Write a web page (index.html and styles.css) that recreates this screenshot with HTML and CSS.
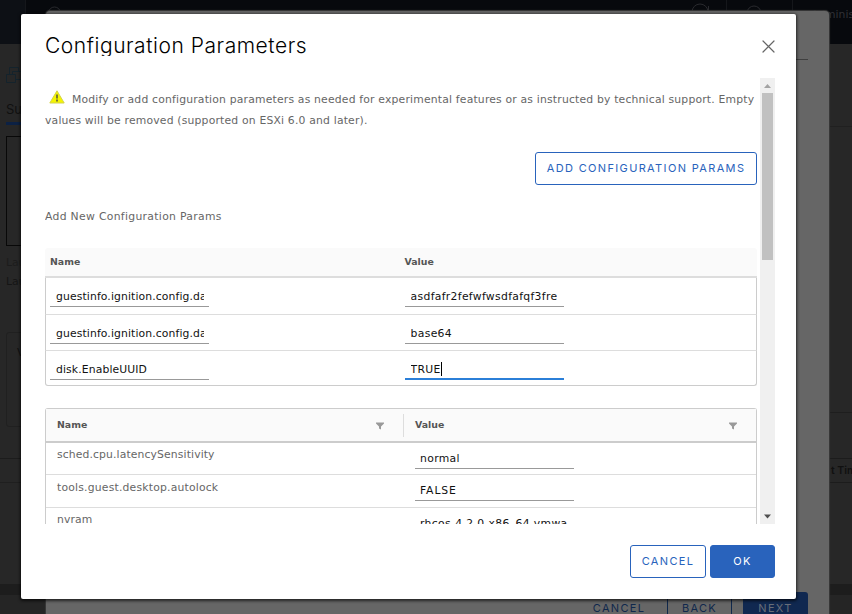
FILE: index.html
```html
<!DOCTYPE html>
<html lang="en">
<head>
<meta charset="utf-8">
<title>Configuration Parameters</title>
<link rel="stylesheet" href="styles.css">
</head>
<body>
<div class="page">
  <header class="topbar">
    <div class="topbar-brand"></div>
    <svg class="topbar-icons" width="826" height="44" viewBox="26 0 826 44" fill="none" stroke="#292a2e">
      <path d="M726.500 0v44M792.500 0v44" stroke="#15171b"/>
      <circle cx="54.500" cy="13" r="6"/><path d="M692 12a8 8 0 0 1 16 0M708.500 6v6M747 13a7 7 0 0 1 14 0" />
    </svg>
    <span class="topbar-user">Adminis</span>
  </header>
  <div class="page-main">
    <aside class="page-left">
      <svg class="vm-icon" width="20" height="20" viewBox="0 0 20 20" fill="none" stroke="#14232c"><path d="M3.500 8V1.500h9V5M6.500 8V5.500H18v8h-8"/><path d="M.5 8.500h9v8h-9z"/></svg>
      <span class="tab">Sum</span>
      <div class="console"></div>
      <p class="launch dim">Laun</p>
      <p class="launch">Laun</p>
      <div class="card">V</div>
      <div class="tasks"></div>
    </aside>
    <aside class="page-right">
      <div class="right-top"></div>
      <div class="right-mid"></div>
      <div class="right-row"></div>
      <div class="right-head">t Tim</div>
    </aside>
  </div>
  <div class="page-strip"></div>
  <div class="page-foot"></div>
</div>

<section class="wizard">
  <div class="wizard-rule"></div>
  <footer class="wizard-footer">
    <span class="wbtn plain">CANCEL</span>
    <span class="wbtn outline">BACK</span>
    <span class="wbtn solid">NEXT</span>
  </footer>
</section>

<section class="modal">
  <header class="modal-header">
    <h1>Configuration Parameters</h1>
    <svg class="close" width="13" height="13" viewBox="0 0 13 13" fill="none" stroke="#666" stroke-width="1.200" stroke-linecap="round"><path d="M1 1l11 11M12 1L1 12"/></svg>
  </header>
  <div class="modal-body">
    <div class="content">
      <p class="intro"><svg class="warn" width="16" height="14" viewBox="0 0 16 14"><path d="M8 .8L15.200 13H.8z" fill="#f5f500" stroke="#d3d34a" stroke-linejoin="round"/><path d="M7 4.500h2v4H7zM7 9.500h2v2H7z" fill="#777733"/></svg>Modify or add configuration parameters as needed for experimental features or as instructed by technical support. Empty<br>values will be removed (supported on ESXi 6.0 and later).</p>
      <div class="actions"><button class="btn add">ADD CONFIGURATION PARAMS</button></div>
      <p class="subtitle">Add New Configuration Params</p>
      <div class="new-grid">
        <div class="row head"><span>Name</span><span>Value</span></div>
        <div class="row first"><div class="input"><span>guestinfo.ignition.config.data</span></div><div class="input"><span>asdfafr2fefwfwsdfafqf3fre</span></div></div>
        <div class="row"><div class="input"><span>guestinfo.ignition.config.data</span></div><div class="input"><span>base64</span></div></div>
        <div class="row last"><div class="input"><span>disk.EnableUUID</span></div><div class="input focused"><span>TRUE</span><i class="caret"></i></div></div>
      </div>
      <div class="grid">
        <div class="grow ghead">
          <div class="gcell"><span>Name</span><svg width="8" height="8" viewBox="0 0 8 8"><path d="M0 .5h8v1L5 4.500V7.500L3 6.500v-2L0 1.500z" fill="#999"/></svg></div>
          <div class="gcell"><span>Value</span><svg width="8" height="8" viewBox="0 0 8 8"><path d="M0 .5h8v1L5 4.500V7.500L3 6.500v-2L0 1.500z" fill="#999"/></svg></div>
        </div>
        <div class="grow"><span class="key">sched.cpu.latencySensitivity</span><div class="input"><span>normal</span></div></div>
        <div class="grow second"><span class="key">tools.guest.desktop.autolock</span><div class="input caps"><span>FALSE</span></div></div>
        <div class="grow third"><span class="key">nvram</span><div class="input"><span>rhcos-4.2.0-x86_64-vmwa</span></div></div>
      </div>
    </div>
    <div class="scrollbar">
      <svg width="15" height="15" viewBox="0 0 15 15"><path d="M4 10l3.500-4L11 10z" fill="#a3a3a3"/></svg>
      <div class="thumb"></div>
      <svg width="15" height="15" viewBox="0 0 15 15"><path d="M4 5.500h7L7.500 9.500z" fill="#505050"/></svg>
    </div>
  </div>
  <footer class="modal-footer">
    <button class="btn cancel">CANCEL</button>
    <button class="btn ok">OK</button>
  </footer>
</section>
</body>
</html>
```

FILE: styles.css
```css
* { box-sizing: border-box; }
body {
  margin: 0;
  width: 852px;
  height: 614px;
  overflow: hidden;
  position: relative;
  background: #272727;
  font-family: "DejaVu Sans", sans-serif;
  font-size: 10.8px;
  color: #666;
}
p, h1 { margin: 0; }

/* dimmed page below the dialogs */
.page { height: 614px; display: flex; flex-direction: column; }
.topbar { height: 44px; flex: none; display: flex; position: relative; background: #07090d; overflow: hidden; }
.topbar-brand { width: 26px; background: #0d1015; border-right: 1px solid #15171b; }
.topbar-icons { flex: none; }
.topbar-user { position: absolute; left: 811px; top: 8px; color: #303136; }
.page-main { height: 540px; display: flex; justify-content: space-between; }
.page-left { width: 46px; overflow: hidden; padding-left: 6px; display: flex; flex-direction: column; }
.vm-icon { margin-top: 22px; flex: none; }
.tab { height: 24px; margin-top: 15px; font: 13px/16px Inter, sans-serif; color: #101010; border-bottom: 3px solid #0c2144; flex: none; }
.console { height: 110px; margin-top: 11px; border: 1px solid #080808; flex: none; }
.launch { color: #151515; height: 19px; line-height: 19px; padding-top: 7px; flex: none; }
.launch.dim { color: #1c1c1c; }
.card { height: 95px; margin-top: 48px; padding: 13px 10px; border: 1px solid #202020; border-radius: 3px; color: #101010; flex: none; }
.tasks { height: 25px; margin: 31px 0 0 -6px; border-top: 1px solid #1c1c1c; border-bottom: 1px solid #1f1f1f; flex: none; }
.page-right { width: 23px; overflow: hidden; }
.right-top { height: 83px; border-bottom: 1px solid #202020; }
.right-mid { height: 285px; }
.right-row { height: 47px; border-top: 1px solid #1e1e1e; border-bottom: 1px solid #1c1c1c; }
.right-head { height: 24px; padding-left: 2px; white-space: nowrap; font: 600 10.5px/24px Inter, sans-serif; color: #101010; border-bottom: 1px solid #1c1c1c; }
.page-strip { height: 11px; background: #1d1d1d; }
.page-foot { height: 19px; background: #252525; }

/* wizard between page and dialog */
.wizard {
  position: absolute; left: 46px; top: 11px; width: 783px; height: 620px;
  background: #666; border-radius: 4px;
  box-shadow: 0 0 1px 1px #3a3a3a;
}
.wizard-rule { margin: 48px 21px 0 22px; border-top: 1px solid #3f3f3f; }
.wizard-footer { margin-top: 532px; padding-right: 21px; height: 33px; display: flex; justify-content: flex-end; }
.wbtn { height: 33px; line-height: 32px; text-align: center; border-radius: 3px; font-family: Inter, sans-serif; font-size: 11px; letter-spacing: 1.3px; color: #10284c; }
.plain { width: 78px; margin-right: 9px; }
.outline { width: 65px; border: 1px solid #10284c; line-height: 30px; margin-right: 11px; }
.solid { width: 65px; background: #102850; color: #686e78; }

/* dialog */
.modal {
  position: absolute; left: 21px; top: 14px; width: 775px; height: 585px;
  padding: 0 21px 21px 24px;
  background: #fff; border-radius: 2px;
  box-shadow: 0 1px 3px 1px rgba(0, 0, 0, .65);
  display: flex; flex-direction: column;
}
.modal-header { height: 64px; display: flex; justify-content: space-between; }
h1 { margin-top: 18px; height: 24px; line-height: 28px; overflow: hidden; font-family: Inter, sans-serif; font-size: 21px; font-weight: 300; color: #000; letter-spacing: .54px; white-space: nowrap; }
.close { margin-top: 26px; }
.modal-body { height: 446px; display: flex; justify-content: space-between; overflow: hidden; }
.content { width: 712px; height: 446px; overflow: hidden; }
.intro { margin-top: 11px; height: 42px; line-height: 21px; white-space: nowrap; letter-spacing: .187px; }
.warn { margin: 0 7px 0 4px; vertical-align: -1px; }
.actions { margin-top: 21px; display: flex; justify-content: flex-end; }
.btn { height: 33px; padding: 0 0 2px; border: 1px solid #2963bc; border-radius: 3px; background: #fff; color: #2963bc; font: 400 11px Inter, sans-serif; letter-spacing: 1.35px; white-space: nowrap; }
.add { width: 222px; }
.subtitle { margin-top: 21px; line-height: 21px; letter-spacing: .32px; }

.new-grid { margin-top: 21px; }
.row { display: flex; height: 36px; padding-left: 4px; border: solid #ccc; border-width: 0 1px; border-bottom: 1px solid #ddd; }
.row > * { margin-right: 196px; }
.row.head { height: 30px; padding-left: 5px; background: #fafafa; border: 0; border-bottom: 2px solid #ddd; border-radius: 3px 3px 0 0; font: 700 9.4px/27px "DejaVu Sans", sans-serif; color: #555; }
.row.head span { width: 159px; }
.row.head span + span { padding-left: 1px; }
.row.first { height: 37px; }
.row.last { height: 35px; border-bottom-color: #ccc; border-radius: 0 0 3px 3px; }
.input { width: 159px; height: 22px; margin-top: 7px; padding: 0 5px 0 6px; border-bottom: 1px solid #999; line-height: 23px; color: #111; letter-spacing: .12px; display: flex; flex: none; }
.input + .input { padding-left: 5.6px; letter-spacing: .32px; }
.grid .input { padding-left: 5px; letter-spacing: .34px; }
.grid .caps { letter-spacing: .9px; }
.input span { overflow: hidden; white-space: nowrap; }
.focused { border-bottom: 2px solid #2b7fd8; }
.caret { width: 1px; height: 14px; margin-top: 4px; background: #000; }

.grid { margin-top: 22px; border: 1px solid #ccc; border-bottom: 0; border-radius: 3px 3px 0 0; }
.grow { display: flex; height: 32px; border-bottom: 1px solid #ddd; }
.ghead { height: 34px; background: #fafafa; border-bottom: 2px solid #ccc; font: 700 9.4px "DejaVu Sans", sans-serif; color: #555; }
.gcell { width: 358px; margin: 5px 0 4px; padding: 0 19px 0 11px; display: flex; justify-content: space-between; align-items: center; border-right: 1px solid #ddd; }
.gcell span { margin-top: -2px; }
.gcell + .gcell { width: 352px; border-right: 0; }
.key { width: 358px; padding-left: 11px; line-height: 23px; letter-spacing: .12px; }
.grid .input { margin-left: 11px; margin-top: 4px; }
.second { height: 33px; }
.second .key { line-height: 25px; letter-spacing: .2px; }
.third .input { margin-top: 11px; height: 17px; line-height: 9px; }

.scrollbar { width: 15px; height: 446px; background: #f0f0f0; display: flex; flex-direction: column; }
.scrollbar svg { flex: none; }
.scrollbar svg:last-child { margin-top: auto; }
.thumb { width: 11px; height: 167px; margin-left: 2px; background: #c1c1c1; }
.modal-footer { margin-top: 21px; display: flex; justify-content: flex-end; gap: 4px; }
.cancel { width: 76px; }
.ok { width: 65px; background: #2963bc; color: #fff; }
```
